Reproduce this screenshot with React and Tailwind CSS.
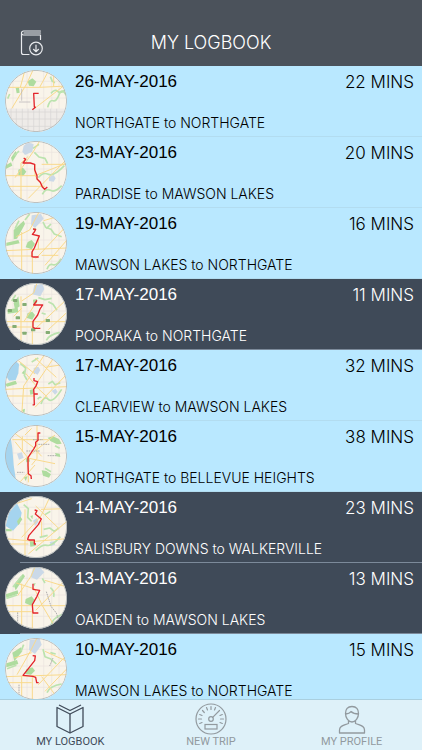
import React from "react";

const trips = [
  {
    date: "26-MAY-2016", mins: "22 MINS", route: "NORTHGATE to NORTHGATE", dark: false,
    map: {
      parks: ["M68 34l14-9 12 10-8 14-14-2z", "M32 54l10-2 2 16-9 2z"],
      creeks: ["M138 70q12-14 20-6t22-4", "M128 112q6-24 16-20t18-18 22 2", "M136 20l6 14 8 4", "M14 72l-6 14"],
      water: [],
      roads: ["M0 52H104L186 48", "M186 40L88 116", "M60 0L46 52", "M104 52L132 0", "M20 116L66 40L84 0", "M146 50V0"],
      grid: true,
      path: "M101 70H86L88 110L91 112L82 119",
    },
  },
  {
    date: "23-MAY-2016", mins: "20 MINS", route: "PARADISE to MAWSON LAKES", dark: false,
    map: {
      parks: ["M40 86l14-6 10 12-10 14-14-4z", "M18 50l14-20 4 10-14 22z", "M0 74l18-10 4 10-20 10z"],
      creeks: ["M88 34l14 14 18 4 8 16", "M100 110q14-18 30-10t48-26", "M112 160q10-20 24-12t34-14", "M84 22l18-12", "M28 44l14-14"],
      water: ["M56 14q12-14 30-4l-4 22-22 10-8-10z", "M132 108l14-6 6 10-6 10-14-2z"],
      roads: ["M0 104H90L186 66", "M30 110L86 30L104 0", "M48 186V66L70 46", "M186 54L70 172", "M90 70V104L120 146", "M0 136H120", "M110 70H186"],
      path: "M56 51L62 55L54 66H76L89 70V86L96 104V114L106 124L112 138L119 145L127 138",
    },
  },
  {
    date: "19-MAY-2016", mins: "16 MINS", route: "MAWSON LAKES to NORTHGATE", dark: false,
    map: {
      parks: ["M68 90l12-6 10 12-10 16-18-6z", "M4 92l36-8 4 10-40 8z", "M26 54l30-28 4 10-24 44-10 2z", "M84 50l10-2-6 10z"],
      creeks: ["M30 50l12-24", "M114 30l8 16 16 6 10 14 22 8", "M124 50l14-14", "M126 172q6-18 18-14t24-18", "M60 24l14-18"],
      water: ["M80 10l28-4 8 14-26 28-12-10z"],
      roads: ["M0 116L90 112L186 108", "M50 60V186", "M82 110V186", "M34 74L74 54L102 0", "M186 40L92 140", "M186 84L120 160", "M0 132H80", "M100 112V72", "M116 26L170 10", "M110 130H160"],
      path: "M84 51L92 52L88 60L82 67L103 72L98 84L88 108L81 120V134L86 135H101",
    },
  },
  {
    date: "17-MAY-2016", mins: "11 MINS", route: "POORAKA to NORTHGATE", dark: true,
    map: {
      parks: ["M68 90l14-4 8 10-8 14-18-6z", "M8 80l30-6 2 14-32 4z", "M26 60l14-20 4 30-14 10z", "M84 50l12-2v12l-10 6z"],
      creeks: ["M100 44l20 6 20-4", "M130 56l14 8 12 18", "M20 54l12-18", "M124 172q6-16 40-24", "M110 90l12 4"],
      water: ["M88 6l24-2 6 14-12 22-24-6z"],
      roads: ["M0 116H186", "M48 40V186", "M82 116V186", "M50 54L86 30L96 0", "M186 48L88 140", "M186 88L130 140", "M0 132H80", "M58 114L92 60", "M26 100L50 76"],
      labels: [[24, 48], [52, 60], [8, 78], [32, 100], [22, 126], [52, 146], [122, 108], [78, 136], [122, 144]],
      path: "M96 52L86 66H113L105 78L98 96L84 115V133L90 136H106",
    },
  },
  {
    date: "17-MAY-2016", mins: "32 MINS", route: "CLEARVIEW to MAWSON LAKES", dark: false,
    map: {
      parks: ["M0 90l32-10 4 10-30 8z", "M74 108l10-2 2 14-10 2z", "M50 58l8-10 4 14z", "M50 168l10-4-2 14z"],
      creeks: ["M46 28l16 14-4 22 8 14", "M108 150q10-28 22-14t40-30", "M130 90l12-8 8 10 16-6", "M80 24l20-12", "M98 136q8-10 10-4"],
      water: ["M0 30L24 14 42 30 40 58 32 78 12 80 0 60z", "M86 42l14-4 6 10-8 14-12-6z", "M140 110l12-6 6 10-8 8z"],
      roads: ["M0 106L186 98", "M50 186L56 96L120 0", "M90 12L154 70", "M120 40L186 30", "M62 58L102 106L128 130", "M0 126H90", "M186 60L90 160", "M40 20L90 60", "M154 0L92 92"],
      path: "M87 72V80L98 83L94 94L86 106L87 120H97H87L88 152L83 153",
    },
  },
  {
    date: "15-MAY-2016", mins: "38 MINS", route: "NORTHGATE to BELLEVUE HEIGHTS", dark: false,
    map: {
      parks: ["M62 100l12-2v12l-10 2z", "M128 38l16-4 18 8 8 14-14 2-20-10z", "M150 84l14 2 2 10-12-2z", "M110 136l14 2 14 10-6 10-18-6z", "M56 156l12-2-6 14z"],
      creeks: ["M150 62l14 8", "M120 130l18 10"],
      water: ["M0 20L16 30 22 70 26 120 32 160 0 186z", "M36 86l14-4 6 16-14 6z"],
      roads: ["M22 44H130", "M28 24L84 66L110 94", "M96 0V100L80 120", "M38 120L150 30", "M30 50L70 100V172", "M72 100L150 116", "M46 170L90 120", "M60 30L80 10", "M52 34V80"],
      minor: ["M64 78h42", "M84 44h30", "M100 58h34", "M128 92h26", "M36 142h22"],
      path: "M106 24H99V46L92 52V62L86 72L78 84L69 98V122L70 146L78 152L79 162",
    },
  },
  {
    date: "14-MAY-2016", mins: "23 MINS", route: "SALISBURY DOWNS to WALKERVILLE", dark: true,
    map: {
      parks: ["M36 76l10-14 6 8-12 18z", "M74 134l16 2 2 14-16 2z", "M0 98l20 2v6H0z", "M76 60l8-2-2 12z"],
      creeks: ["M56 26l14 12-2 26 12 12", "M116 100l18-4 14 10 14-10", "M92 164q20-20 34-16t40-26", "M120 56l16-10", "M104 124l24-6"],
      water: ["M12 50L36 22 50 50 44 82 24 104 2 90z", "M84 74l12-8 4 12-10 12z", "M134 138l14-2 2 10-12 4z"],
      roads: ["M0 128L90 136L186 128", "M50 124L108 60L136 0", "M92 30L160 96", "M186 76L70 174", "M108 40L186 38", "M60 40V186", "M0 144H70", "M36 22L80 8", "M110 76V120"],
      path: "M89 42L96 44L91 54L109 69L100 86L72 118L68 130L72 132H88V144H93",
    },
  },
  {
    date: "13-MAY-2016", mins: "13 MINS", route: "OAKDEN to MAWSON LAKES", dark: true,
    map: {
      parks: ["M62 96l18-8 8 10-10 18-18-8z", "M2 82l36-12 2 10-36 12z", "M26 54l28-34 6 8-28 42z", "M84 50l8-2-4 10z"],
      creeks: ["M24 60l26-32", "M4 94l32-10", "M136 62q14 10 10 28", "M138 176q4-22 34-34", "M112 34l8 14"],
      water: ["M84 4l20-4 14 16-22 22-20-8z"],
      roads: ["M0 116L186 116", "M50 50V186", "M82 114V186", "M38 86L78 28L90 0", "M186 34L92 130", "M120 40L186 60", "M34 48L90 66", "M90 68L112 116L150 180", "M0 134H80"],
      minor: ["M124 74l14 44 16 20 10 30", "M38 136v40"],
      path: "M84 50V67L104 70L96 88L82 113L84 138H100",
    },
  },
  {
    date: "10-MAY-2016", mins: "15 MINS", route: "MAWSON LAKES to NORTHGATE", dark: false,
    map: {
      parks: ["M64 94l18-6 8 10-12 12-18-2z", "M4 76l32-10 4 12-36 10z", "M22 44l26-16 4 12-24 30z"],
      creeks: ["M6 92l28-10", "M114 34l6 22 16 6 18 16", "M56 20l-8 20", "M126 164q8-20 44-26", "M136 44l16 4"],
      water: ["M74 6l30-4 6 18-20 28-18-12z"],
      roads: ["M0 116L186 110", "M50 114V186", "M82 112V186", "M36 110L76 40L96 0", "M186 50L100 140", "M120 40L186 70", "M28 60L80 44", "M0 134H80", "M110 116L150 170", "M186 92L120 160"],
      minor: ["M42 140v36", "M144 60l-10 24"],
      path: "M83 53L91 54L89 68L54 112L84 115L92 118L95 134H101",
    },
  },
];

function TripMap({ map }) {
  return (
    <svg viewBox="0 0 186 186" className="size-[62px] rounded-full bg-[#f9f4ea]" aria-hidden="true">
      <g fill="none" stroke="#ece4de" strokeWidth="2">
        <path d="M0 34H186M0 84H186M0 148H186M24 0V186M66 0V186M116 0V186M140 0V186M162 0V186" />
      </g>
      {map.water.map((d) => <path key={d} d={d} fill={/^M(0|12) /.test(d) ? "#a5d4ef" : "#cbd9e8"} />)}
      <g fill="#aedc9e">{map.parks.map((d) => <path key={d} d={d} />)}</g>
      <g fill="none" stroke="#bbe3ae" strokeWidth="5" strokeLinejoin="round">
        {map.creeks.map((d) => <path key={d} d={d} />)}
      </g>
      <g fill="none" stroke="#f9d98c" strokeWidth="3">
        {map.roads.map((d) => <path key={d} d={d} />)}
      </g>
      {map.minor && (
        <g fill="none" stroke="#b0aeae" strokeWidth="3" strokeDasharray="5 2">
          {map.minor.map((d) => <path key={d} d={d} />)}
        </g>
      )}
      {map.labels && map.labels.map(([x, y]) => (
        <rect key={`${x}-${y}`} x={x} y={y} width="13" height="9" rx="2" fill="#84ad74" />
      ))}
      {map.grid && (
        <g>
          <rect x="0" y="116" width="186" height="70" fill="#eeebe8" />
          <path d="M0 126H186M0 147H186M0 169H186M18 116V186M34 116V186M52 116V186M69 116V186M86 116V186M103 116V186M120 116V186M137 116V186M155 116V186" fill="none" stroke="#d8d5d3" strokeWidth="2" />
          <path d="M50 56v36M42 96h34" fill="none" stroke="#b3b0b2" strokeWidth="2" />
        </g>
      )}
      <path d={map.path} fill="none" stroke="#e3242b" strokeWidth="4" strokeLinejoin="round" />
      <circle cx="93" cy="93" r="92" fill="none" stroke="#b3b9ba" strokeWidth="3" />
    </svg>
  );
}

function TripRow({ trip }) {
  return (
    <li className={trip.dark ? "bg-[#3f4a58] text-white" : "bg-[#b9e8ff] text-black"}>
      <div className="flex h-[70px] items-start pt-1 pr-2 pl-[5px]">
        <TripMap map={trip.map} />
        <div className="flex h-[66px] min-w-0 flex-1 flex-col justify-between pb-[3px] pl-2">
          <div className="flex items-center justify-between leading-[24px]">
            <h2 className="text-[17px]">{trip.date}</h2>
            <span className="font-['Inter','Liberation_Sans',sans-serif] text-[17px] font-light">{trip.mins}</span>
          </div>
          <p className="font-['Inter','Liberation_Sans',sans-serif] text-[14px] leading-[20px] font-light whitespace-nowrap">
            {trip.route}
          </p>
        </div>
      </div>
      <div className={trip.dark ? "ml-5 h-px bg-[#7c8a9a]" : "ml-5 h-px bg-[#b2dcf0]"} />
    </li>
  );
}

function DownloadBookIcon() {
  return (
    <svg width="24" height="26" viewBox="0 0 24 26" fill="none" stroke="#e8eaed" strokeWidth="1.2" strokeLinecap="round" strokeLinejoin="round">
      <path d="M20.500 1H3.500A2 2 0 0 0 1.500 3V22.500A2 2 0 0 0 3.500 24.500H9M3.500 5H20.500V9.500M3.500 5A2 2 0 0 1 1.500 3M4 3H20.500" />
      <circle cx="16" cy="18.500" r="6.300" />
      <path d="M16 15v6.500M13.500 19.300L16 21.700L18.500 19.300" />
    </svg>
  );
}

function BookIcon() {
  return (
    <svg width="28" height="30" viewBox="0 0 28 30" fill="none" stroke="currentColor" strokeWidth="1.300" strokeLinejoin="round">
      <path d="M14 10L1 3.500V22.500L14 29L27 22.500V3.500Z" />
      <path d="M14 10V29M3 1L14 6.500L25 1" />
    </svg>
  );
}

function GaugeIcon() {
  return (
    <svg width="32" height="32" viewBox="0 0 32 32" fill="none" stroke="currentColor" strokeWidth="1.200" strokeLinecap="round">
      <circle cx="16" cy="16" r="15" />
      <circle cx="16" cy="16" r="2.300" />
      <path d="M17.700 14.300L24.500 7.500" />
      <rect x="10" y="21.500" width="12" height="4.500" />
      <path d="M16 3.500V6.500M11.500 4.500L12.500 7M20.500 4.500L19.500 7M7.500 7.500L9.300 9.500M4.700 11.500L7 12.500M3.500 16H6.500M4.700 20.500L7 19.500M27.300 11.500L25 12.500M28.500 16H25.500M27.300 20.500L25 19.500" />
    </svg>
  );
}

function ProfileIcon() {
  return (
    <svg width="28" height="30" viewBox="0 0 28 30" fill="none" stroke="currentColor" strokeWidth="1.300" strokeLinejoin="round">
      <path d="M14 2.500C9.500 2.500 7.500 5.500 7.500 9.500C7.500 14 10.500 18 14 18C17.500 18 20.500 14 20.500 9.500C20.500 5.500 18.500 2.500 14 2.500Z" />
      <path d="M7.500 10C10 9.800 12 9 13 7.500C15 9.500 18 10 20.500 10" />
      <path d="M10.500 16.500V19.500C6 21.500 1.500 21.500 1.500 26V29H26.500V26C26.500 21.500 22 21.500 17.500 19.500V16.500" />
    </svg>
  );
}

const tabs = [
  { label: "MY LOGBOOK", Icon: BookIcon, active: true },
  { label: "NEW TRIP", Icon: GaugeIcon, active: false },
  { label: "MY PROFILE", Icon: ProfileIcon, active: false },
];

export default function App() {
  return (
    <div className="flex h-screen flex-col overflow-hidden bg-[#b9e8ff] font-['Liberation_Sans',Arial,sans-serif]">
      <header className="grid h-[66px] shrink-0 grid-cols-[1fr_auto_1fr] items-center bg-[#4b525b] px-5 pt-5 text-white">
        <button type="button" aria-label="Download logbook" className="justify-self-start">
          <DownloadBookIcon />
        </button>
        <h1 className="font-['Inter','Liberation_Sans',sans-serif] text-[18px] leading-[24px] font-light">MY LOGBOOK</h1>
      </header>
      <main className="min-h-0 flex-1 overflow-y-auto [scrollbar-width:none]">
        <ul>
          {trips.map((trip, i) => <TripRow key={i} trip={trip} />)}
        </ul>
      </main>
      <nav className="grid h-[51px] shrink-0 grid-cols-3 border-t border-[#a9cfdf] bg-[#def1f9]">
        {tabs.map(({ label, Icon, active }) => (
          <a
            key={label}
            href="#"
            aria-current={active ? "page" : undefined}
            className={`flex flex-col items-center justify-between pt-[3px] pb-px font-['Roboto',sans-serif] text-[11px] leading-[14px] ${active ? "text-[#3f4a58]" : "text-[#929a9f]"}`}
          >
            <span className="flex h-8 items-center"><Icon /></span>
            {label}
          </a>
        ))}
      </nav>
    </div>
  );
}
